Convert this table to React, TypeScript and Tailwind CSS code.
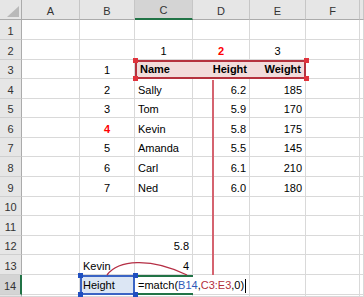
import React from 'react';

type Cell = { t?: React.ReactNode; a?: 'l' | 'r' | 'c'; c?: string; bg?: string; b?: string };

const COLS = ['A', 'B', 'C', 'D', 'E', 'F', 'G'];
const colW = ['w-[58px]', 'w-[55px]', 'w-[58px]', 'w-[57px]', 'w-[56px]', 'w-[54px]', 'w-[4px]'];
const rowH = [
  'h-[20px]', 'h-[20px]', 'h-[19px]', 'h-[20px]', 'h-[19px]', 'h-[20px]', 'h-[19px]',
  'h-[20px]', 'h-[20px]', 'h-[19px]', 'h-[20px]', 'h-[19px]', 'h-[20px]', 'h-[20px]', 'h-[2px]',
];

const formula = (
  <span className="flex items-end">
    <span>
      =match(<span className="text-[#2f5bb7]">B14</span>,<span className="text-[#b3303c]">C3:E3</span>,0)
    </span>
    <span className="ml-px mb-[-1px] inline-block w-px h-[14px] bg-black" />
  </span>
);

const RED = 'border-[#b5323e]';

const data: Record<string, Cell> = {
  C2: { t: '1', a: 'c' },
  D2: { t: '2', a: 'c', c: 'text-[#ff0000] font-bold' },
  E2: { t: '3', a: 'c' },
  B3: { t: '1', a: 'c' },
  C3: { t: 'Name', a: 'l', c: 'font-bold', bg: 'bg-[#f2dcdb]', b: `border-y-2 border-l-2 ${RED}` },
  D3: { t: 'Height', a: 'r', c: 'font-bold', bg: 'bg-[#f2dcdb]', b: `border-y-2 ${RED}` },
  E3: { t: 'Weight', a: 'r', c: 'font-bold', bg: 'bg-[#f2dcdb]', b: `border-y-2 border-r-2 ${RED}` },
  B4: { t: '2', a: 'c' }, C4: { t: 'Sally' }, D4: { t: '6.2', a: 'r' }, E4: { t: '185', a: 'r' },
  B5: { t: '3', a: 'c' }, C5: { t: 'Tom' }, D5: { t: '5.9', a: 'r' }, E5: { t: '170', a: 'r' },
  B6: { t: '4', a: 'c', c: 'text-[#ff0000] font-bold' }, C6: { t: 'Kevin' }, D6: { t: '5.8', a: 'r' }, E6: { t: '175', a: 'r' },
  B7: { t: '5', a: 'c' }, C7: { t: 'Amanda' }, D7: { t: '5.5', a: 'r' }, E7: { t: '145', a: 'r' },
  B8: { t: '6', a: 'c' }, C8: { t: 'Carl' }, D8: { t: '6.1', a: 'r' }, E8: { t: '210', a: 'r' },
  B9: { t: '7', a: 'c' }, C9: { t: 'Ned' }, D9: { t: '6.0', a: 'r' }, E9: { t: '180', a: 'r' },
  C12: { t: '5.8', a: 'r' },
  B13: { t: 'Kevin' }, C13: { t: '4', a: 'r' },
  B14: { t: 'Height', bg: 'bg-[#dce6f4]', b: 'border-2 border-[#3b64c4]', c: 'pl-px' },
  C14: { t: formula, c: 'z-10 whitespace-nowrap overflow-visible', b: 'border-y-2 border-[#217346]' },
};

function alignCls(a?: 'l' | 'r' | 'c') {
  if (a === 'r') return 'justify-end pr-[3px]';
  if (a === 'c') return 'justify-center';
  return 'justify-start pl-[3px]';
}

function Row({ r, h }: { r: number; h: string }) {
  const active = r === 14;
  return (
    <div className={`flex ${h}`}>
      <div
        className={`w-[22px] shrink-0 flex items-end justify-center pb-px border-b border-b-[#cfcfcf] ${
          active ? 'bg-[#d4d4d4] border-r-2 border-r-[#217346]' : 'bg-[#e6e6e6] border-r border-r-[#ababab]'
        } text-[#333] overflow-hidden`}
      >
        {r <= 14 ? r : ''}
      </div>
      {COLS.map((col, i) => {
        const cell = data[`${col}${r}`];
        return (
          <div
            key={col}
            className={`relative shrink-0 ${colW[i]} flex items-end pb-px ${
              cell?.b ?? 'border-r border-b border-[#d9d9d9]'
            } ${alignCls(cell?.a)} ${cell?.bg ?? 'bg-white'} ${cell?.c ?? 'overflow-hidden'}`}
          >
            {cell?.t}
          </div>
        );
      })}
    </div>
  );
}

export default function App() {
  return (
    <div className="relative w-[364px] h-[297px] overflow-hidden bg-white text-[11px] leading-[13px] text-black font-['Liberation_Sans',Arial,sans-serif]">
      {/* column header row */}
      <div className="flex h-[20px]">
        <div className="w-[22px] shrink-0 flex items-end justify-end bg-[#e6e6e6] border-r border-b border-[#ababab]">
          <svg width="21" height="19" viewBox="0 0 21 19">
            <polygon points="7,17 19,17 19,6" fill="#b9b9b9" />
          </svg>
        </div>
        {COLS.map((col, i) => (
          <div
            key={col}
            className={`shrink-0 ${colW[i]} flex items-end justify-center pb-px text-[#333] border-r border-r-[#c6c6c6] ${
              col === 'C' ? 'bg-[#d4d4d4] border-b-2 border-b-[#217346]' : 'bg-[#e6e6e6] border-b border-b-[#ababab]'
            }`}
          >
            {col === 'G' ? '' : col}
          </div>
        ))}
      </div>
      {rowH.map((h, idx) => (
        <Row key={idx} r={idx + 1} h={h} />
      ))}

      {/* annotation layer: range handles, guide line and arc drawn over the sheet */}
      <svg className="absolute inset-0 pointer-events-none z-20" width="364" height="297" viewBox="0 0 364 297">
        <line x1="213" y1="80" x2="213" y2="275" stroke="#d5636f" strokeWidth="2" />
        <g fill="#e0333c">
          <rect x="133" y="58" width="5" height="5" />
          <rect x="304" y="58" width="5" height="5" />
          <rect x="133" y="76" width="5" height="5" />
          <rect x="304" y="76" width="5" height="5" />
        </g>
        <g fill="#1f4fc0">
          <rect x="78" y="273" width="5" height="5" />
          <rect x="133" y="273" width="5" height="5" />
          <rect x="78" y="292" width="5" height="5" />
          <rect x="133" y="292" width="5" height="5" />
        </g>
        <path d="M107 275 C118 260 150 257 187 275" fill="none" stroke="#b52f45" strokeWidth="1.3" />
      </svg>
    </div>
  );
}
